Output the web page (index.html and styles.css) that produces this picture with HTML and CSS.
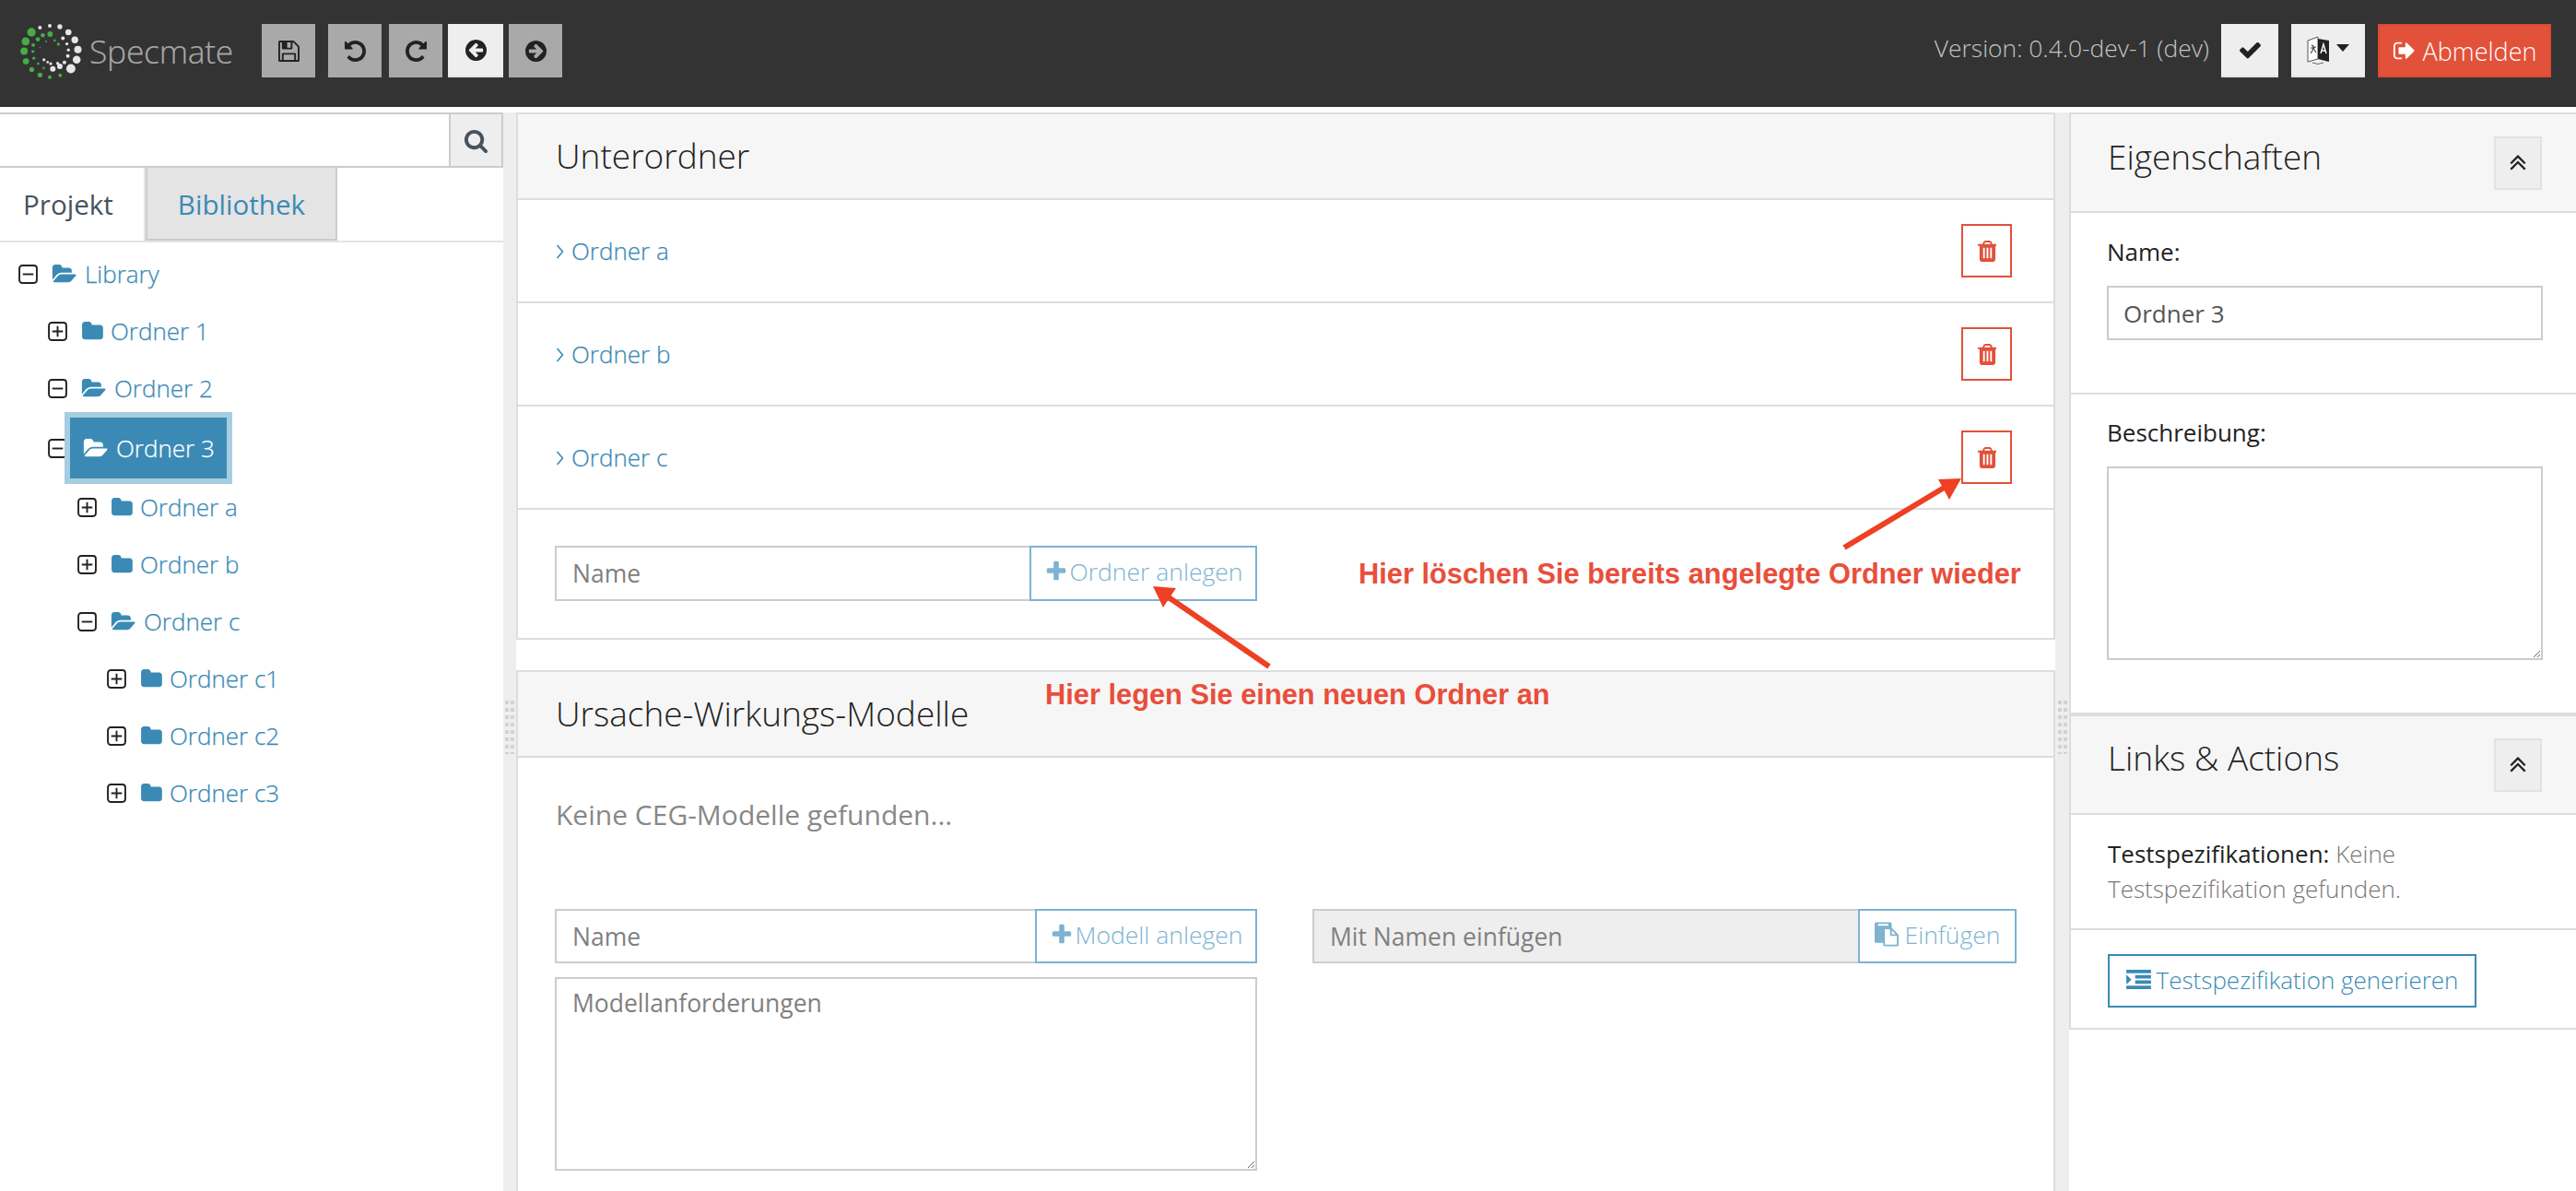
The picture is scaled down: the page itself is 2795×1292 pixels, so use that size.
FILE: index.html
```html
<!DOCTYPE html>
<html lang="de">
<head>
<meta charset="utf-8">
<title>Specmate</title>
<link rel="stylesheet" href="styles.css">
</head>
<body>
<svg class="defs" width="0" height="0">
<defs>
<symbol id="i-check" viewBox="121 304 1550 1222"><path d="M1671 566q0 40-28 68l-724 724-136 136q-28 28-68 28t-68-28l-136-136-362-362q-28-28-28-68t28-68l136-136q28-28 68-28t68 28l294 295 656-657q28-28 68-28t68 28l136 136q28 28 28 68z"/></symbol>
<symbol id="i-plus" viewBox="0 0 1792 1792"><path d="M1600 736v192q0 40-28 68t-68 28h-416v416q0 40-28 68t-68 28h-192q-40 0-68-28t-28-68v-416h-416q-40 0-68-28t-28-68v-192q0-40 28-68t68-28h416v-416q0-40 28-68t68-28h192q40 0 68 28t28 68v416h416q40 0 68 28t28 68z"/></symbol>
<symbol id="i-search" viewBox="0 0 1792 1792"><path d="M1216 832q0-185-131.500-316.500t-316.500-131.500-316.500 131.500-131.500 316.500 131.500 316.500 316.500 131.500 316.500-131.500 131.500-316.500zm512 832q0 52-38 90t-90 38q-54 0-90-38l-343-342q-179 124-399 124-143 0-273.500-55.500t-225-150-150-225-55.500-273.500 55.500-273.500 150-225 225-150 273.500-55.500 273.500 55.500 225 150 150 225 55.500 273.500q0 220-124 399l343 343q37 37 37 90z"/></symbol>
<symbol id="i-folder" viewBox="0 128 1728 1536"><path d="M1728 608v704q0 92-66 158t-158 66h-1216q-92 0-158-66t-66-158v-960q0-92 66-158t158-66h320q92 0 158 66t66 158v32h672q92 0 158 66t66 158z"/></symbol>
<symbol id="i-open" viewBox="0 128 1920 1536"><path d="M1879 952q0 31-31 66l-336 396q-43 51-120.500 86.500t-143.500 35.500h-1088q-34 0-60.500-13t-26.500-43q0-31 31-66l336-396q43-51 120.500-86.500t143.500-35.500h1088q34 0 60.500 13t26.500 43zm-343-344v160h-832q-94 0-197 47.500t-164 119.500l-337 396-5 6q0-4-.5-12.500t-.5-12.500v-960q0-92 66-158t158-66h320q92 0 158 66t66 158v32h544q92 0 158 66t66 158z"/></symbol>
<symbol id="i-left" viewBox="128 128 1536 1536"><path d="M1408 960v-128q0-26-19-45t-45-19h-502l189-189q19-19 19-45t-19-45l-91-91q-18-18-45-18t-45 18l-362 362-91 91q-18 18-18 45t18 45l91 91 362 362q18 18 45 18t45-18l91-91q18-18 18-45t-18-45l-189-189h502q26 0 45-19t19-45zm256-64q0 209-103 385.500t-279.500 279.500-385.500 103-385.500-103-279.500-279.500-103-385.500 103-385.500 279.500-279.500 385.500-103 385.500 103 279.500 279.500 103 385.500z"/></symbol>
<symbol id="i-right" viewBox="128 128 1536 1536"><path d="M1413 896q0-27-18-45l-91-91-362-362q-18-18-45-18t-45 18l-91 91q-18 18-18 45t18 45l189 189h-502q-26 0-45 19t-19 45v128q0 26 19 45t45 19h502l-189 189q-19 19-19 45t19 45l91 91q18 18 45 18t45-18l362-362 91-91q18-18 18-45zm251 0q0 209-103 385.500t-279.500 279.500-385.500 103-385.500-103-279.500-279.500-103-385.500 103-385.500 279.500-279.500 385.500-103 385.500 103 279.500 279.500 103 385.500z"/></symbol>
<symbol id="i-undo" viewBox="128 128 1536 1536"><path d="M1664 896q0 156-61 298t-164 245-245 164-298 61q-172 0-327-72.500t-264-204.500q-7-10-6.500-22.500t8.500-20.500l137-138q10-9 25-9 16 2 23 12 73 95 179 147t225 52q104 0 198.500-40.500t163.500-109.500 109.500-163.500 40.500-198.500-40.500-198.500-109.500-163.500-163.500-109.500-198.500-40.500q-98 0-188 35.500t-160 101.500l137 138q31 30 14 69-17 40-59 40h-448q-26 0-45-19t-19-45v-448q0-42 40-59 39-17 69 14l130 129q107-101 244.500-156.500t284.500-55.500q156 0 298 61t245 164 164 245 61 298z"/></symbol>
<symbol id="i-redo" viewBox="128 128 1536 1536"><path d="M1664 256v448q0 26-19 45t-45 19h-448q-42 0-59-40-17-39 14-69l138-138q-148-137-349-137-104 0-198.500 40.500t-163.500 109.500-109.500 163.500-40.500 198.500 40.500 198.500 109.500 163.500 163.500 109.500 198.500 40.500q119 0 225-52t179-147q7-10 23-12 15 0 25 9l137 138q9 8 9.500 20.500t-7.500 22.500q-109 132-264 204.500t-327 72.500q-156 0-298-61t-245-164-164-245-61-298 61-298 164-245 245-164 298-61q147 0 284.500 55.500t244.500 156.500l130-129q29-31 70-14 39 17 39 59z"/></symbol>
<symbol id="i-save" viewBox="128 128 1536 1536"><path d="M512 1536h768v-384h-768v384zm896 0h128v-896q0-14-10-38.500t-20-34.500l-281-281q-10-10-34-20t-39-10v416q0 40-28 68t-68 28h-576q-40 0-68-28t-28-68v-416h-128v1280h128v-416q0-40 28-68t68-28h832q40 0 68 28t28 68v416zm-384-928v-320q0-13-9.500-22.500t-22.500-9.500h-192q-13 0-22.500 9.500t-9.500 22.500v320q0 13 9.500 22.500t22.500 9.500h192q13 0 22.500-9.500t9.500-22.500zm640 32v928q0 40-28 68t-68 28h-1344q-40 0-68-28t-28-68v-1344q0-40 28-68t68-28h928q40 0 88 20t76 48l280 280q28 28 48 76t20 88z"/></symbol>
<symbol id="i-trash" viewBox="128 128 1408 1536"><path d="M704 1376v-704q0-14-9-23t-23-9h-64q-14 0-23 9t-9 23v704q0 14 9 23t23 9h64q14 0 23-9t9-23zm256 0v-704q0-14-9-23t-23-9h-64q-14 0-23 9t-9 23v704q0 14 9 23t23 9h64q14 0 23-9t9-23zm256 0v-704q0-14-9-23t-23-9h-64q-14 0-23 9t-9 23v704q0 14 9 23t23 9h64q14 0 23-9t9-23zm-544-992h448l-48-117q-7-9-17-11h-317q-10 2-17 11zm928 32v64q0 14-9 23t-23 9h-96v948q0 83-47 143.500t-113 60.500h-832q-66 0-113-58.500t-47-141.500v-952h-96q-14 0-23-9t-9-23v-64q0-14 9-23t23-9h309l70-167q15-37 54-63t79-26h320q40 0 79 26t54 63l70 167h309q14 0 23 9t9 23z"/></symbol>
<symbol id="i-signout" viewBox="0 192 1664 1408"><path d="M704 1440q0 4 1 20t.5 26.500-3 23.500-10 19.500-20.500 6.500h-320q-119 0-203.500-84.500t-84.500-203.500v-704q0-119 84.500-203.500t203.500-84.500h320q13 0 22.500 9.500t9.500 22.500q0 4 1 20t.5 26.500-3 23.500-10 19.500-20.500 6.500h-320q-66 0-113 47t-47 113v704q0 66 47 113t113 47h312l11.500 1 11.500 3 8 5.500 7 9 2 13.500zm928-544q0 26-19 45l-544 544q-19 19-45 19t-45-19-19-45v-288h-448q-26 0-45-19t-19-45v-384q0-26 19-45t45-19h448v-288q0-26 19-45t45-19 45 19l544 544q19 19 19 45z"/></symbol>
<symbol id="i-dup" viewBox="0 0 1792 1792"><path d="M1395 1312q0 13-10 23l-50 50q-10 10-23 10t-23-10l-393-393-393 393q-10 10-23 10t-23-10l-50-50q-10-10-10-23t10-23l466-466q10-10 23-10t23 10l466 466q10 10 10 23zm0-384q0 13-10 23l-50 50q-10 10-23 10t-23-10l-393-393-393 393q-10 10-23 10t-23-10l-50-50q-10-10-10-23t10-23l466-466q10-10 23-10t23 10l466 466q10 10 10 23z"/></symbol>
<symbol id="i-indent" viewBox="0 128 1792 1536"><path d="M352 832q0 14-9 23l-288 288q-9 9-23 9-13 0-22.500-9.500t-9.500-22.500v-576q0-13 9.500-22.500t22.500-9.500q14 0 23 9l288 288q9 9 9 23zm1440 480v192q0 13-9.500 22.500t-22.500 9.500h-1728q-13 0-22.500-9.500t-9.500-22.500v-192q0-13 9.500-22.500t22.500-9.500h1728q13 0 22.500 9.500t9.500 22.500zm0-384v192q0 13-9.500 22.500t-22.500 9.500h-1088q-13 0-22.500-9.500t-9.500-22.500v-192q0-13 9.500-22.500t22.500-9.500h1088q13 0 22.500 9.500t9.500 22.500zm0-384v192q0 13-9.500 22.500t-22.500 9.500h-1088q-13 0-22.500-9.500t-9.500-22.500v-192q0-13 9.500-22.500t22.500-9.500h1088q13 0 22.500 9.500t9.500 22.500zm0-384v192q0 13-9.500 22.500t-22.500 9.500h-1728q-13 0-22.500-9.500t-9.500-22.500v-192q0-13 9.500-22.500t22.500-9.500h1728q13 0 22.500 9.500t9.500 22.500z"/></symbol>
<symbol id="i-paste" viewBox="0 0 1792 1792"><path d="M768 1664h896v-640h-416q-40 0-68-28t-28-68v-416h-384v1152zm256-1440v-64q0-13-9.500-22.500t-22.500-9.500h-704q-13 0-22.500 9.500t-9.500 22.500v64q0 13 9.500 22.500t22.500 9.500h704q13 0 22.500-9.500t9.500-22.500zm256 672h299l-299-299v299zm512 128v672q0 40-28 68t-68 28h-960q-40 0-68-28t-28-68v-160h-544q-40 0-68-28t-28-68v-1344q0-40 28-68t68-28h1088q40 0 68 28t28 68v328q21 13 36 28l408 408q28 28 48 76t20 88z"/></symbol>
<symbol id="i-expand" viewBox="0 0 20 20"><rect x="1" y="1" width="18" height="18" rx="3" fill="none" stroke="#222" stroke-width="1.8"/><path d="M4.500 10h11M10 4.500v11" stroke="#222" stroke-width="1.800" fill="none"/></symbol>
<symbol id="i-collapse" viewBox="0 0 20 20"><rect x="1" y="1" width="18" height="18" rx="3" fill="none" stroke="#222" stroke-width="1.8"/><path d="M4.500 10h11" stroke="#222" stroke-width="1.800" fill="none"/></symbol>
<symbol id="i-chev" viewBox="0 0 9 16"><path d="M1.500 1l6 7-6 7" fill="none" stroke="#3b8ab5" stroke-width="1.600"/></symbol>
</defs>
</svg>

<header class="topbar">
  <svg class="logo" viewBox="60 75 210 190" aria-hidden="true">
    <g fill="#46ad46">
      <circle cx="102" cy="105" r="14"/><circle cx="83" cy="135" r="13"/><circle cx="78" cy="167" r="12"/><circle cx="84" cy="200" r="10"/><circle cx="103" cy="227" r="8"/><circle cx="130" cy="245" r="8"/><circle cx="162" cy="252" r="6"/><circle cx="196" cy="246" r="6"/><circle cx="123" cy="128" r="7"/><circle cx="163" cy="111" r="9"/><circle cx="139" cy="115" r="7"/><circle cx="108" cy="147" r="6"/><circle cx="107" cy="168" r="5"/><circle cx="110" cy="190" r="5"/><circle cx="124" cy="208" r="4"/><circle cx="142" cy="222" r="4"/><circle cx="150" cy="135" r="3"/><circle cx="178" cy="132" r="4"/><circle cx="190" cy="144" r="5"/><circle cx="130" cy="155" r="2"/>
    </g>
    <g fill="#e6e6e6">
      <circle cx="130" cy="90" r="6"/><circle cx="162" cy="84" r="6"/><circle cx="195" cy="87" r="8"/><circle cx="223" cy="105" r="10"/><circle cx="244" cy="130" r="11"/><circle cx="254" cy="162" r="12"/><circle cx="250" cy="195" r="13"/><circle cx="231" cy="224" r="15"/><circle cx="195" cy="217" r="9"/><circle cx="172" cy="225" r="9"/><circle cx="205" cy="125" r="6"/><circle cx="218" cy="143" r="5"/><circle cx="223" cy="163" r="5"/><circle cx="221" cy="183" r="6"/><circle cx="210" cy="204" r="6"/><circle cx="188" cy="207" r="5"/><circle cx="165" cy="208" r="5"/><circle cx="143" cy="195" r="5"/><circle cx="155" cy="203" r="4"/>
    </g>
  </svg>
  <span class="brand">Specmate</span>
  <button class="tool tool-off tool-save"><svg class="ico"><use href="#i-save"/></svg></button>
  <button class="tool tool-off tool-undo"><svg class="ico"><use href="#i-undo"/></svg></button>
  <button class="tool tool-off tool-redo"><svg class="ico"><use href="#i-redo"/></svg></button>
  <button class="tool tool-on tool-back"><svg class="ico"><use href="#i-left"/></svg></button>
  <button class="tool tool-off tool-fwd"><svg class="ico"><use href="#i-right"/></svg></button>
  <span class="version">Version: 0.4.0-dev-1 (dev)</span>
  <button class="tool tool-on tool-check"><svg class="ico"><use href="#i-check"/></svg></button>
  <button class="tool tool-on tool-lang">
    <svg class="lang-ico" viewBox="0 0 26 34" aria-hidden="true">
      <path d="M1 7l11-4v24l-11 3z" fill="#fff" stroke="#555" stroke-width="1"/>
      <path d="M12 5l12 2 0 23-12-3z" fill="#222"/>
      <path d="M5 12l2 1 1 4 2 3M7 13l-1 5-2 3M4 15l6-1" stroke="#444" stroke-width="1.100" fill="none"/>
      <path d="M15 21l3-10 3 10M16 18h4" stroke="#fff" stroke-width="1.400" fill="none"/>
      <path d="M6 31q6 3 12 0" stroke="#666" fill="none"/>
    </svg>
    <span class="caret"></span>
  </button>
  <button class="logout"><svg class="ico-logout"><use href="#i-signout"/></svg>Abmelden</button>
</header>

<main class="layout">
  <aside class="nav">
    <div class="search">
      <input class="search-input" type="text" aria-label="Suche">
      <button class="search-btn"><svg class="ico-search"><use href="#i-search"/></svg></button>
    </div>
    <div class="tabs">
      <span class="tab tab-active">Projekt</span>
      <span class="tab tab-idle">Bibliothek</span>
    </div>
    <ul class="tree">
      <li class="node"><svg class="exp"><use href="#i-collapse"/></svg><svg class="fo"><use href="#i-open"/></svg><span>Library</span></li>
      <li class="node d1"><svg class="exp"><use href="#i-expand"/></svg><svg class="fc"><use href="#i-folder"/></svg><span>Ordner 1</span></li>
      <li class="node d1"><svg class="exp"><use href="#i-collapse"/></svg><svg class="fo"><use href="#i-open"/></svg><span>Ordner 2</span></li>
      <li class="node d1 node-sel"><svg class="exp"><use href="#i-collapse"/></svg><span class="sel"><svg class="fo"><use href="#i-open"/></svg><span>Ordner 3</span></span></li>
      <li class="node d2"><svg class="exp"><use href="#i-expand"/></svg><svg class="fc"><use href="#i-folder"/></svg><span>Ordner a</span></li>
      <li class="node d2"><svg class="exp"><use href="#i-expand"/></svg><svg class="fc"><use href="#i-folder"/></svg><span>Ordner b</span></li>
      <li class="node d2"><svg class="exp"><use href="#i-collapse"/></svg><svg class="fo"><use href="#i-open"/></svg><span>Ordner c</span></li>
      <li class="node d3"><svg class="exp"><use href="#i-expand"/></svg><svg class="fc"><use href="#i-folder"/></svg><span>Ordner c1</span></li>
      <li class="node d3"><svg class="exp"><use href="#i-expand"/></svg><svg class="fc"><use href="#i-folder"/></svg><span>Ordner c2</span></li>
      <li class="node d3"><svg class="exp"><use href="#i-expand"/></svg><svg class="fc"><use href="#i-folder"/></svg><span>Ordner c3</span></li>
    </ul>
  </aside>

  <div class="split split-left"><div class="grip"></div></div>

  <section class="center">
    <div class="panel panel-folders">
      <h2 class="panel-head">Unterordner</h2>
      <div class="row"><a class="row-link"><svg class="chev"><use href="#i-chev"/></svg>Ordner a</a><button class="del"><svg class="ico-trash"><use href="#i-trash"/></svg></button></div>
      <div class="row"><a class="row-link"><svg class="chev"><use href="#i-chev"/></svg>Ordner b</a><button class="del"><svg class="ico-trash"><use href="#i-trash"/></svg></button></div>
      <div class="row"><a class="row-link"><svg class="chev"><use href="#i-chev"/></svg>Ordner c</a><button class="del"><svg class="ico-trash"><use href="#i-trash"/></svg></button></div>
      <div class="form-row">
        <div class="group group-folder">
          <input class="field" type="text" placeholder="Name">
          <button class="add"><svg class="ico-add"><use href="#i-plus"/></svg>Ordner anlegen</button>
        </div>
      </div>
    </div>
    <div class="panel panel-models">
      <h2 class="panel-head">Ursache-Wirkungs-Modelle</h2>
      <p class="empty">Keine CEG-Modelle gefunden...</p>
      <div class="model-forms">
        <div class="model-col">
          <div class="group group-model">
            <input class="field" type="text" placeholder="Name">
            <button class="add"><svg class="ico-add"><use href="#i-plus"/></svg>Modell anlegen</button>
          </div>
          <textarea class="area area-model" placeholder="Modellanforderungen"></textarea>
        </div>
        <div class="group group-paste">
          <input class="field field-off" type="text" placeholder="Mit Namen einfügen" disabled>
          <button class="add"><svg class="ico-paste"><use href="#i-paste"/></svg>Einfügen</button>
        </div>
      </div>
    </div>
  </section>

  <div class="split split-right"><div class="grip"></div></div>

  <aside class="side">
    <div class="side-box">
      <div class="side-head side-head-a"><h2 class="side-title">Eigenschaften</h2><button class="fold"><svg class="ico-fold"><use href="#i-dup"/></svg></button></div>
      <div class="prop prop-name">
        <label class="prop-label">Name:</label>
        <input class="prop-input" type="text" value="Ordner 3">
      </div>
      <div class="prop prop-desc">
        <label class="prop-label">Beschreibung:</label>
        <textarea class="area area-desc"></textarea>
      </div>
      <div class="side-head side-head-b"><h2 class="side-title">Links &amp; Actions</h2><button class="fold"><svg class="ico-fold"><use href="#i-dup"/></svg></button></div>
      <p class="specs"><b>Testspezifikationen:</b> Keine Testspezifikation gefunden.</p>
      <div class="gen-row"><button class="gen"><svg class="ico-indent"><use href="#i-indent"/></svg>Testspezifikation generieren</button></div>
    </div>
  </aside>
</main>

<svg class="arrows" viewBox="0 0 2795 1292" aria-hidden="true">
  <path class="arrow-line" d="M2001 594L2111 528"/>
  <path class="arrow-head" d="M2128 519L2103 520L2115 542Z"/>
  <path class="arrow-line" d="M1377 723L1268 648"/>
  <path class="arrow-head" d="M1251 636L1276 638L1262 659Z"/>
</svg>
<p class="note note-del">Hier löschen Sie bereits angelegte Ordner wieder</p>
<p class="note note-add">Hier legen Sie einen neuen Ordner an</p>
</body>
</html>
```
FILE: styles.css
```css
* { box-sizing: border-box; }
html, body { margin: 0; height: 1292px; overflow: hidden; background: #fff; }
body { font-family: "Open Sans", "Liberation Sans", sans-serif; font-size: 26px; color: #222; position: relative; }
button { font-family: inherit; padding: 0; cursor: pointer; }
input, textarea { font-family: inherit; }
h2, p, ul { margin: 0; padding: 0; }
.defs { position: absolute; }

.topbar { height: 116px; background: #333; display: flex; align-items: flex-start; padding: 26px 27px 0 20px; }
.logo { width: 70px; height: 63px; margin-top: -1px; filter: blur(.5px); }
.brand { color: #a8a8a8; font-size: 35.5px; font-weight: 300; line-height: 58px; margin-left: 7px; width: 187px; letter-spacing: -.3px; -webkit-text-stroke: .2px #a8a8a8; }
.tool { height: 58px; width: 58px; border: 0; display: flex; align-items: center; justify-content: center; flex: none; }
.tool-off { background: #a9a9a9; }
.tool-on { background: #eee; border-bottom: 2px solid #e2e2e2; }
.ico { width: 23px; height: 23px; fill: #222; }
.tool-undo { margin-left: 14px; }
.tool-redo { margin-left: 8px; }
.tool-back { margin-left: 6px; width: 60px; }
.tool-fwd { margin-left: 6px; }
.version { margin-left: auto; color: #c4c4c4; font-size: 26.4px; font-weight: 300; line-height: 52px; margin-right: 13px; }
.tool-check { width: 62px; }
.tool-lang { width: 80px; margin-left: 14px; gap: 6px; }
.lang-ico { width: 26px; height: 34px; }
.caret { width: 0; height: 0; border: 7px solid transparent; border-top: 8px solid #222; border-bottom: 0; margin-top: -4px; }
.logout { margin-left: 14px; height: 58px; width: 188px; border: 2px solid #dd4a30; background: #e2513a; color: #fff; font-size: 27px; font-weight: 300; display: flex; align-items: center; justify-content: center; gap: 9px; }
.ico-logout { width: 24px; height: 24px; fill: #fff; }

.layout { display: flex; margin-top: 6px; height: 1170px; }
.nav { width: 546px; flex: none; }
.search { display: flex; height: 60px; border-top: 2px solid #ccc; border-bottom: 2px solid #ccc; }
.search-input { flex: 1; border: 0; min-width: 0; outline: 0; }
.search-btn { width: 59px; background: #eee; border: 0; border-left: 2px solid #ccc; border-right: 2px solid #ccc; display: flex; align-items: center; justify-content: center; }
.ico-search { width: 27px; height: 27px; fill: #46525e; }
.tabs { display: flex; height: 81px; border-bottom: 2px solid #e4e4e4; }
.tab { font-size: 29.6px; line-height: 79px; }
.tab-active { width: 158px; padding-left: 25px; color: #46525e; border-right: 2px solid #e4e4e4; }
.tab-idle { width: 208px; text-align: center; color: #3b8ab5; background: #e4e4e4; border: 2px solid #ccc; border-top: 0; }

.tree { list-style: none; padding: 3px 0 0 20px; }
.node { height: 62px; display: flex; align-items: center; color: #3b8ab5; font-weight: 300; font-size: 26px; -webkit-text-stroke: .25px #3b8ab5; }
.node-sel { height: 66px; margin-top: 1px; }
.d1 { margin-left: 32px; } .d2 { margin-left: 64px; } .d3 { margin-left: 96px; }
.exp { width: 21px; height: 21px; flex: none; }
.fc { width: 24px; height: 21px; fill: #3b8ab5; margin: 0 8px 0 15px; flex: none; }
.fo { width: 28px; height: 21px; fill: #3b8ab5; margin: 0 8px 0 15px; flex: none; }
.sel { margin-left: 3px; height: 66px; width: 170px; background: #3b8ab5; color: #fff; outline: 6px solid #a6cee0; display: flex; align-items: center; padding-left: 14px; position: relative; -webkit-text-stroke: .25px #fff; }
.sel .fo { fill: #fff; margin: 0 8px 0 0; }

.split { flex: none; background: #eee; position: relative; }
.split-left { width: 14px; }
.split-right { width: 15px; }
.grip { width: 10px; height: 62px; margin: 634px auto 0; background-image: linear-gradient(#eee 50%, transparent 50%), linear-gradient(90deg, #d2d2d2 4px, transparent 4px 6px, #d2d2d2 6px); background-size: 10px 8px, 10px 8px; }

.center { width: 1670px; flex: none; background: #fff; }
.panel { border-left: 2px solid #ddd; border-right: 2px solid #ddd; border-top: 2px solid #ddd; }
.panel-folders { height: 572px; border-bottom: 2px solid #ddd; }
.panel-models { margin-top: 33px; height: 600px; }
.panel-head { height: 93px; background: #f6f6f6; border-bottom: 2px solid #ddd; font-size: 37px; font-weight: 300; line-height: 90px; padding-left: 41px; color: #222; }
.row { height: 112px; border-bottom: 2px solid #ddd; display: flex; align-items: center; justify-content: space-between; padding: 0 45px 0 41px; }
.row-link { color: #3b8ab5; font-size: 26px; font-weight: 300; display: flex; align-items: center; -webkit-text-stroke: .25px #3b8ab5; }
.chev { width: 9px; height: 16px; margin-right: 8px; margin-top: 2px; }
.del { width: 55px; height: 58px; background: #fff; border: 2px solid #e2513a; display: flex; align-items: center; justify-content: center; }
.ico-trash { width: 21px; height: 23px; fill: #e2513a; }
.form-row { padding: 39px 0 0 40px; }
.group { display: flex; height: 60px; }
.group-folder { width: 762px; }
.field { flex: 1; min-width: 0; height: 100%; border: 2px solid #ccc; border-right: 0; padding: 0 0 0 17px; font-size: 26.5px; font-weight: 400; color: #777; outline: 0; background: #fff; }
.field::placeholder, .area::placeholder { color: #808080; opacity: 1; }
.field-off { background: #eee; }
.add { border: 2px solid #7cb3d1; background: #fff; color: #7cb3d1; font-size: 26.5px; font-weight: 300; display: flex; align-items: center; justify-content: center; padding-bottom: 4px; flex: none; }
.group-folder .add { width: 247px; }
.ico-add { width: 26px; height: 26px; fill: #7cb3d1; margin-right: 2px; }
.ico-paste { width: 26px; height: 27px; fill: #7cb3d1; margin-right: 7px; }
.empty { color: #888; font-size: 30px; line-height: 40px; padding: 42px 0 0 41px; }
.model-forms { display: flex; padding: 82px 0 0 40px; }
.model-col { width: 762px; }
.group-model { height: 59px; }
.group-model .add { width: 241px; }
.area { display: block; border: 2px solid #ccc; background: #fff; font-size: 26.5px; outline: 0; color: #777; }
.area-model { margin-top: 15px; width: 762px; height: 210px; padding: 8px 17px; }
.group-paste { width: 764px; height: 59px; margin-left: 60px; }
.group-paste .add { width: 172px; }

.side { flex: 1; min-width: 0; }
.side-box { border-left: 2px solid #ddd; border-top: 2px solid #ddd; height: 995px; border-bottom: 2px solid #ddd; }
.side-head { background: #f6f6f6; display: flex; justify-content: space-between; padding: 24px 37px 0 40px; }
.side-head-a { height: 107px; border-bottom: 2px solid #ddd; }
.side-head-a .side-title { margin-top: -1px; }
.side-head-b { height: 111px; border-top: 4px solid #ddd; border-bottom: 2px solid #ddd; }
.side-title { font-size: 37px; font-weight: 300; line-height: 46px; color: #222; }
.side-head-b .side-title { margin-top: -2px; }
.fold { width: 52px; height: 58px; background: #eee; border: 2px solid #e2e2e2; display: flex; align-items: center; justify-content: center; }
.ico-fold { width: 30px; height: 30px; fill: #222; margin-top: -2px; }
.prop { padding-left: 39px; }
.prop-label { display: block; font-size: 26px; color: #222; line-height: 36px; }
.prop-name { height: 197px; border-bottom: 2px solid #ddd; padding-top: 24px; }
.prop-desc { height: 345px; padding-top: 23px; }
.prop-input { display: block; margin-top: 19px; width: 473px; height: 59px; border: 2px solid #ccc; padding: 0 0 0 16px; font-size: 26px; font-weight: 400; color: #555; outline: 0; }
.area-desc { margin-top: 19px; width: 473px; height: 210px; }
.specs { height: 125px; padding: 23px 40px 0 40px; border-bottom: 2px solid #ddd; font-size: 26px; line-height: 38px; font-weight: 300; color: #777; }
.specs b { font-weight: 400; color: #222; }
.gen-row { padding: 26px 0 0 40px; }
.gen { width: 400px; height: 58px; background: #fff; border: 2px solid #3b8ab5; color: #3b8ab5; font-size: 26px; font-weight: 300; display: flex; align-items: center; justify-content: center; gap: 6px; padding-bottom: 2px; }
.ico-indent { width: 27px; height: 23px; fill: #3b8ab5; }

.arrows { position: absolute; left: 0; top: 0; width: 2795px; height: 1292px; pointer-events: none; }
.arrow-line { stroke: #ee4023; stroke-width: 6px; fill: none; }
.arrow-head { fill: #ee4023; }
.note { position: absolute; font-family: "Liberation Sans", Arial, sans-serif; font-weight: 700; font-size: 30.8px; color: #e94e3b; line-height: 36px; white-space: nowrap; }
.note-del { left: 1474px; top: 605px; }
.note-add { left: 1134px; top: 736px; }
```
